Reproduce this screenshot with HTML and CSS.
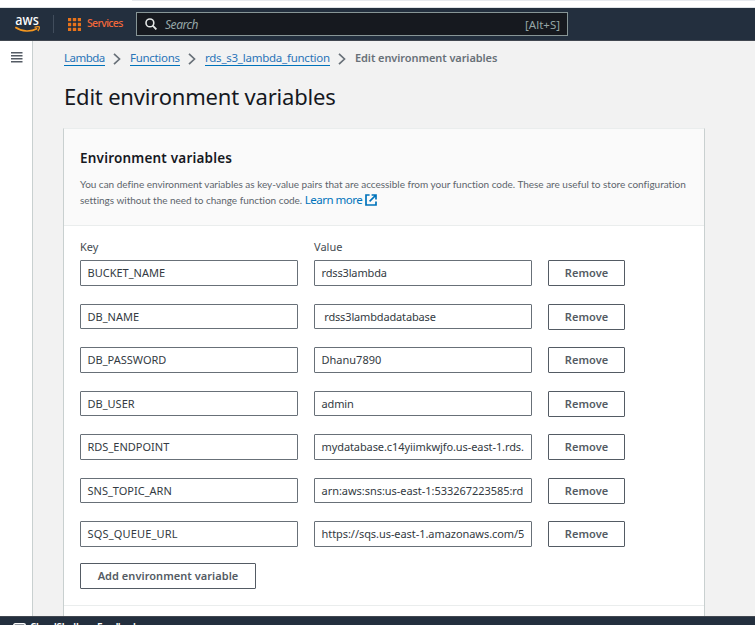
FILE: index.html
```
<!DOCTYPE html>
<html lang="en">
<head>
<meta charset="utf-8">
<title>Edit environment variables - Lambda</title>
<link rel="stylesheet" href="styles.css">
</head>
<body>
<div class="chrome"><div class="omnibox"></div></div>
<header class="topnav">
  <svg class="logo" width="26" height="18" viewBox="0 0 26 18">
    <text class="logo-text" x="0.3" y="9.5" textLength="23.5" lengthAdjust="spacingAndGlyphs">aws</text>
    <path d="M0.3 12.2C7 17 16 17 22.3 13.6" fill="none" stroke="#f7981f" stroke-width="1.7"/>
    <path d="M19.6 12.3C22 11.4 24.2 11.4 24.4 12C24.6 12.8 23.9 14.6 22.9 16" fill="none" stroke="#f7981f" stroke-width="1.3"/>
  </svg>
  <div class="divider"></div>
  <svg class="grid-icon" width="13" height="13" viewBox="0 0 13 13" fill="#e8731c">
    <path d="M0 0h3v3H0zM5 0h3v3H5zM10 0h3v3h-3zM0 5h3v3H0zM5 5h3v3H5zM10 5h3v3h-3zM0 10h3v3H0zM5 10h3v3H5zM10 10h3v3h-3z" stroke="#e8731c" stroke-width=".4"/>
  </svg>
  <span class="services">Services</span>
  <div class="search">
    <svg width="12" height="12" viewBox="0 0 12 12" fill="none" stroke="#e3e6e6" stroke-width="1.6"><circle cx="4.9" cy="4.9" r="3.9"/><path d="M7.7 7.7L11.4 11.4" stroke-width="1.9"/></svg>
    <span class="search-hint">Search</span>
    <span class="shortcut">[Alt+S]</span>
  </div>
</header>
<div class="layout">
  <aside class="rail"><svg width="12" height="11" viewBox="0 0 12 11" fill="#545b64"><path d="M0 0h11.5v1.4H0zM0 3h11.5v1.4H0zM0 6h11.5v1.4H0zM0 9h11.5v1.4H0z"/></svg></aside>
  <main class="content">
    <nav class="crumbs">
      <a class="c1">Lambda</a><svg class="chev" width="8" height="12" viewBox="0 0 8 12"><path d="M1 .8L6.5 6L1 11.2"/></svg>
      <a class="c2">Functions</a><svg class="chev" width="8" height="12" viewBox="0 0 8 12"><path d="M1 .8L6.5 6L1 11.2"/></svg>
      <a class="c3">rds_s3_lambda_function</a><svg class="chev" width="8" height="12" viewBox="0 0 8 12"><path d="M1 .8L6.5 6L1 11.2"/></svg>
      <span class="current">Edit environment variables</span>
    </nav>
    <h1>Edit environment variables</h1>
    <section class="card">
      <div class="card-head">
        <h2>Environment variables</h2>
        <p><span class="d1">You can define environment variables as key-value pairs that are accessible from your function code. These are useful to store configuration</span><br><span class="d2">settings without the need to change function code.</span> <a class="learn">Learn more</a><svg class="ext" width="12" height="12" viewBox="0 0 12 12" fill="none" stroke="#0073bb" stroke-width="1.7"><path d="M4.6 1H1v10h10V7.4M6.6 1H11v4.4M11 1L4.6 7.4"/></svg></p>
      </div>
      <div class="form">
        <div class="labels"><span>Key</span><span>Value</span></div>
        <div class="rows">
          <div class="row"><div class="field">BUCKET_NAME</div><div class="field value">rdss3lambda</div><button>Remove</button></div>
          <div class="row"><div class="field">DB_NAME</div><div class="field value"> rdss3lambdadatabase</div><button>Remove</button></div>
          <div class="row"><div class="field">DB_PASSWORD</div><div class="field">Dhanu7890</div><button>Remove</button></div>
          <div class="row"><div class="field">DB_USER</div><div class="field value">admin</div><button>Remove</button></div>
          <div class="row"><div class="field">RDS_ENDPOINT</div><div class="field value host">mydatabase.c14yiimkwjfo.us-east-1.rds.</div><button>Remove</button></div>
          <div class="row"><div class="field">SNS_TOPIC_ARN</div><div class="field value arn">arn:aws:sns:us-east-1:533267223585:rd</div><button>Remove</button></div>
          <div class="row"><div class="field queue">SQS_QUEUE_URL</div><div class="field value url">https://sqs.us-east-1.amazonaws.com/5</div><button>Remove</button></div>
        </div>
        <button class="add">Add environment variable</button>
      </div>
    </section>
  </main>
</div>
<footer class="footer">
  <svg width="13" height="11" viewBox="0 0 13 11" fill="none" stroke="#fff" stroke-width="1.4"><rect x=".7" y=".7" width="11.6" height="9.6" rx="1.5"/><path d="M3 4l2 1.5L3 7"/></svg>
  <span class="shell">CloudShell</span><span class="feedback">Feedback</span>
</footer>
</body>
</html>
```
FILE: styles.css
```
* { box-sizing: border-box; }
body { margin: 0; height: 625px; overflow: hidden; display: flex; flex-direction: column; background: #f2f2f2; color: #16191f; font-family: "Noto Sans", sans-serif; font-size: 11px; }
.chrome { height: 8px; flex: none; background: #fff; border-bottom: 1px solid #dfe3e6; }
.omnibox { height: 1px; margin-left: 132px; background: #e6e9ee; }
.topnav { height: 33px; flex: none; background: #232f3e; border-bottom: 1px solid #414750; display: flex; align-items: center; padding-left: 15px; }
.logo { flex: none; overflow: visible; }
.logo-text { font: 500 14.5px "Noto Sans", sans-serif; fill: #fff; }
.divider { width: 1px; height: 18px; background: #414d5c; margin: 0 14px 0 12px; }
.grid-icon { flex: none; }
.services { color: #f0683a; font-size: 10.5px; font-weight: 500; margin-left: 6px; width: 49px; line-height: 14px; margin-bottom: 2px; letter-spacing: -.65px; }
.search { width: 432px; height: 24px; background: #16191f; border: 1px solid #879596; display: flex; align-items: center; padding: 0 7px 0 8px; color: #95a5a6; font-size: 12px; }
.search-hint { font-style: italic; margin-left: 8px; letter-spacing: -.45px; }
.shortcut { margin-left: auto; font-size: 11.5px; }
.layout { display: flex; flex: 1; min-height: 0; }
.rail { width: 33px; background: #fff; border-right: 1px solid #c9d0d0; padding: 11px 0 0 11px; line-height: 0; }
.content { flex: 1; padding: 9px 0 0 31px; overflow: hidden; }
.crumbs { display: flex; align-items: flex-start; height: 17px; font-size: 11.5px; line-height: 15px; white-space: nowrap; }
.crumbs a { color: #2a74b8; border-bottom: 1px solid #0073bb; height: 16px; }
.c1 { width: 41px; letter-spacing: -.5px; }
.c2 { width: 50px; letter-spacing: -.3px; }
.c3 { width: 125px; letter-spacing: -.24px; }
.chev { margin: 3px 9px 0 8px; fill: none; stroke: #687078; stroke-width: 1.7; }
.current { color: #687078; font-weight: 600; font-size: 11px; letter-spacing: -.08px; }
h1 { margin: 15px 0 0; height: 28px; font-size: 22px; line-height: 28px; font-weight: 400; letter-spacing: -.19px; }
.card { width: 642px; height: 520px; margin: 18px 0 0 -1px; background: #fff; border: 1px solid #c9d0d0; border-top-color: #eaeded; }
.card-head { height: 97px; padding: 19px 0 0 16px; background: #fafafa; border-bottom: 1px solid #eaeded; }
h2 { margin: 0; font-size: 13.5px; line-height: 20px; font-weight: 600; letter-spacing: .2px; }
.card-head p { margin: 8px 0 0; font-family: Lato, sans-serif; font-size: 10px; line-height: 16px; letter-spacing: -.02px; color: #5d656c; white-space: nowrap; }
.learn { font: 11.5px/15px "Noto Sans", sans-serif; color: #0073bb; letter-spacing: -.5px; }
.ext { vertical-align: -2px; margin-left: 3px; }
.form { height: 380px; padding: 13px 16px 0; border-bottom: 1px solid #eaeded; }
.labels { display: grid; grid-template-columns: 234px 1fr; height: 21px; line-height: 15px; color: #444b52; }
.rows { display: grid; grid-auto-rows: 25.5px; row-gap: 18px; }
.row { display: grid; grid-template-columns: 218px 218px 77px; column-gap: 16px; }
.field { border: 1px solid #687078; border-radius: 1px; height: 25.5px; line-height: 24px; padding: 0 6.5px; color: #333a42; white-space: pre; overflow: hidden; }
.value { letter-spacing: -.15px; }
.host { letter-spacing: -.09px; }
.arn { letter-spacing: -.04px; }
.url { letter-spacing: -.06px; }
.queue { letter-spacing: .17px; }
button { height: 26px; border: 1px solid #545b64; border-radius: 1px; background: #fff; color: #545b64; font: 600 11px/23px "Noto Sans", sans-serif; padding: 0 0 1px; letter-spacing: .05px; }
.add { display: block; width: 176px; margin-top: 16px; }
.footer { height: 9px; flex: none; background: #232f3e; border-top: 1px solid #414750; overflow: hidden; display: flex; padding: 6px 0 0 13px; color: #fff; font-size: 10px; font-weight: 600; line-height: 12px; }
.footer svg { flex: none; }
.footer span { margin-top: -2px; letter-spacing: -.3px; }
.shell { margin-left: 4px; width: 67px; }
.footer .feedback { letter-spacing: -.65px; }
```
